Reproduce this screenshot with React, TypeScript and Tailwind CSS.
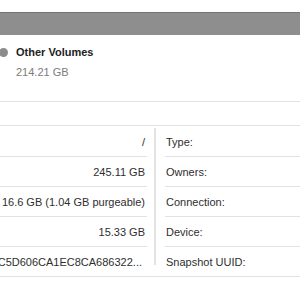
import React from 'react'

const leftRows = [
  { value: '/' },
  { value: '245.11 GB' },
  { value: '16.6 GB (1.04 GB purgeable)' },
  { value: '15.33 GB' },
  { value: 'C5D606CA1EC8CA686322...', inset: true },
]

const rightRows = ['Type:', 'Owners:', 'Connection:', 'Device:', 'Snapshot UUID:']

const rowClass = (i: number) =>
  i === 0
    ? 'h-[31px] pt-[1px] border-b border-[#e2e2e2]'
    : i === 4
      ? 'h-[29px]'
      : 'h-[30px] border-b border-[#e2e2e2]'

export default function App() {
  return (
    <div className="w-[300px] h-[300px] bg-white overflow-hidden font-['Liberation_Sans',Arial,sans-serif] text-[11px] leading-[14px] text-[#2e2e2e]">
      <div className="h-[12px]" />

      {/* storage bar */}
      <div className="h-[23px] bg-[#8e8e8e] border-t border-[#747474]" />

      {/* legend */}
      <div className="h-[67px] pt-[10px] border-b border-[#e2e2e2]">
        <div className="flex items-center gap-2">
          <span className="-ml-px w-[9px] h-[9px] rounded-full bg-[#8c8c8c]" />
          <span className="font-bold text-[#222]">Other Volumes</span>
        </div>
        <div className="mt-[6px] pl-4 text-[#7c7c7c]">214.21 GB</div>
      </div>

      <div className="h-[24px] border-b border-[#e2e2e2]" />

      {/* info table */}
      <div className="flex border-b border-[#e2e2e2]">
        <div className="w-[147px]">
          {leftRows.map((row, i) => (
            <div
              key={i}
              className={`${rowClass(i)} flex items-center justify-end overflow-hidden whitespace-nowrap ${
                row.inset ? 'pr-[5px]' : 'pr-[2px]'
              }`}
            >
              {row.value}
            </div>
          ))}
        </div>
        <div className="w-[7px]" />
        <div className="w-[2px] mt-[2px] h-[137px] bg-[#e4e4e4]" />
        <div className="w-[9px]" />
        <div className="flex-1">
          {rightRows.map((label, i) => (
            <div key={label} className={`${rowClass(i)} flex items-center pl-px whitespace-nowrap`}>
              {label}
            </div>
          ))}
        </div>
      </div>
    </div>
  )
}
